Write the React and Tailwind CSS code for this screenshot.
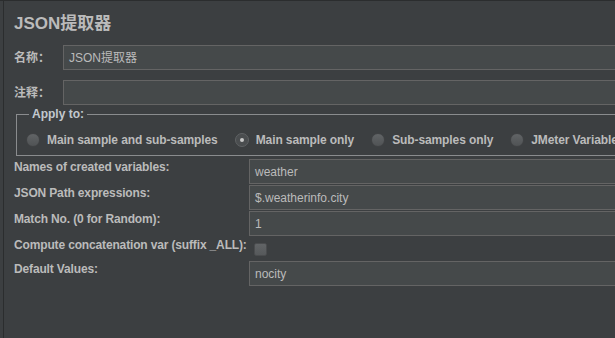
import React from "react";

const Field = ({ value }) => (
  <div className="flex-1 h-[25px] flex items-center pl-[5px] bg-[#45494a] border border-[#646464] text-[12px] font-normal text-[#bbbbbb]">
    {value}
  </div>
);

const Radio = ({ label, checked }) => (
  <div className="flex items-center shrink-0">
    {checked ? (
      <span className="shrink-0 w-[14px] h-[14px] rounded-full border border-[#5f6264] bg-[#4a4d4f] flex items-center justify-center">
        <span className="w-[4px] h-[4px] rounded-full bg-[#c8c8c8]" />
      </span>
    ) : (
      <span className="shrink-0 w-[14px] h-[14px] rounded-full border border-[#404244] bg-[linear-gradient(#616466,#505355)]" />
    )}
    <span className="ml-[7px] text-[12px] font-bold leading-[14px] tracking-[-0.1px] whitespace-nowrap">{label}</span>
  </div>
);

const Row = ({ label, children, tall = true }) => (
  <div className={tall ? "flex h-[25px] mb-[1px]" : "flex h-[24px]"}>
    <div className="w-[235px] shrink-0 pt-[1px] text-[12px] leading-[15px] font-bold tracking-[-0.15px] whitespace-nowrap">{label}</div>
    <div className="flex-1 flex">{children}</div>
  </div>
);

export default function App() {
  return (
    <div className="w-[615px] h-[338px] overflow-hidden bg-[#3c3f41] border-t border-[#2b2d2e] text-[#bbbbbb] font-['Liberation_Sans','Noto_Sans_CJK_SC',sans-serif]">
      <div className="ml-[3px] h-full w-[760px] border-l border-[#2b2d2e] pl-[10px]">
        {/* Title */}
        <div className="h-[44px] pt-[13px] text-[17px] leading-[20px] font-bold">JSON提取器</div>

        {/* Name / comment */}
        <div className="flex items-center h-[25px]">
          <div className="w-[49px] shrink-0 text-[12px] font-bold">名称：</div>
          <Field value="JSON提取器" />
        </div>
        <div className="flex items-center h-[25px] mt-[10px]">
          <div className="w-[49px] shrink-0 text-[12px] font-bold">注释：</div>
          <Field value="" />
        </div>

        {/* Apply to */}
        <fieldset className="mt-[2px] ml-[2px] border border-[#8a8c8e] pl-[9px] pt-[12px] pb-[8px]">
          <legend className="ml-[3px] px-[3px] text-[12px] font-bold leading-[14px] text-[#c2c8ce]">Apply to:</legend>
          <div className="flex items-center gap-[17px]">
            <Radio label="Main sample and sub-samples" />
            <Radio label="Main sample only" checked />
            <Radio label="Sub-samples only" />
            <Radio label="JMeter Variable Name to use" />
          </div>
        </fieldset>

        {/* Extractor settings */}
        <div className="mt-[3px]">
          <Row label="Names of created variables:">
            <Field value="weather" />
          </Row>
          <Row label="JSON Path expressions:">
            <Field value="$.weatherinfo.city" />
          </Row>
          <Row label="Match No. (0 for Random):">
            <Field value="1" />
          </Row>
          <Row label="Compute concatenation var (suffix _ALL):" tall={false}>
            <div className="flex items-center">
              <span className="ml-[5px] w-[13px] h-[13px] rounded-[2px] border border-[#4a4c4e] bg-[linear-gradient(#616466,#56595b)]" />
            </div>
          </Row>
          <Row label="Default Values:">
            <Field value="nocity" />
          </Row>
        </div>
      </div>
    </div>
  );
}
